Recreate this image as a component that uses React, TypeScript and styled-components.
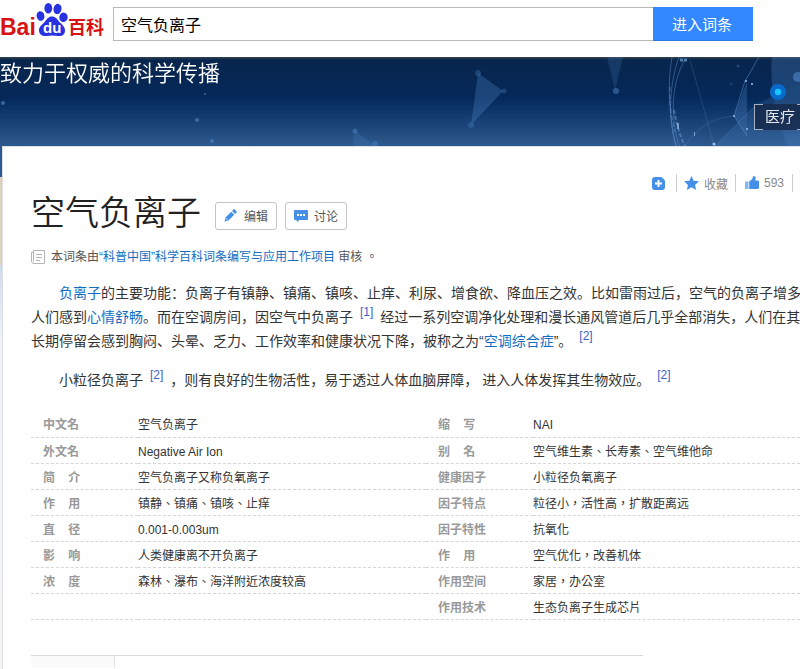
import React from "react";
import styled, { createGlobalStyle } from "styled-components";

const SC = `"Liberation Sans", "Noto Sans CJK SC", sans-serif`;
const TC = `"Liberation Sans", "Noto Sans CJK TC", sans-serif`;

const GlobalStyle = createGlobalStyle`
  *, *::before, *::after { box-sizing: border-box; }
  html, body { margin: 0; background: #fff; overflow-x: hidden; }
  body { font: 14px/24px ${SC}; color: #333; }
  h1, p { margin: 0; font-weight: 400; }
  a { color: #136ec2; text-decoration: none; }
  button, input { font-family: inherit; }
`;

const Page = styled.div`
  display: flex;
  flex-direction: column;
  min-height: 100vh;
`;

const Header = styled.header`
  display: flex;
  height: 57px;
  padding: 7px 47px 0 0;
`;

const LogoLink = styled.a`
  flex: none;
  width: 113px;
  margin-top: -7px;
  svg { display: block; }
`;

const SearchForm = styled.form`
  flex: 1;
  display: flex;
  height: 34px;
`;

const SearchInput = styled.input`
  flex: 1;
  min-width: 0;
  border: 1px solid #b8b8b8;
  border-right: 0;
  border-radius: 0;
  padding: 0 7px;
  font-size: 16px;
  color: #000;
  outline: none;
`;

const SearchButton = styled.button`
  width: 100px;
  border: 0;
  border-bottom: 1px solid #2f78de;
  padding: 0 2px 0 0;
  background: #3388ff;
  color: #fff;
  font-size: 15px;
`;

const Banner = styled.section`
  position: relative;
  height: 89px;
  overflow: hidden;
  background: linear-gradient(#33414f 0, #08264d 3px, #052859 40px, #0d3468 52px, #2d5a8e 100%);
`;

const BannerArt = styled.svg`
  position: absolute;
  top: 0;
  right: 0;
`;

const Slogan = styled.p`
  position: relative;
  font-size: 22px;
  line-height: 34px;
  color: #fff;
  font-weight: 350;
  white-space: nowrap;
`;

const TopicTag = styled.a`
  position: absolute;
  top: 47px;
  right: -6px;
  width: 52px;
  height: 26px;
  padding-left: 10px;
  line-height: 26px;
  font-size: 15px;
  color: #e4e8ee;
  background: rgba(22, 42, 74, 0.85);
  border: solid #a4b0c2;
  border-width: 0 1px;
  &::before, &::after {
    content: "";
    position: absolute;
    top: 0;
    bottom: 0;
    width: 8px;
    border: solid #a4b0c2;
    border-width: 1px 0;
  }
  &::before { left: 0; }
  &::after { right: 0; }
`;

const Body = styled.div`
  flex: 1;
  display: flex;
  background: linear-gradient(#2d5a8e 0 31px, #ddd0bd 31px 119px, #cbdcf0 119px, #f1f4f8 200px, #f5f5f5 100%);
`;

const Article = styled.main`
  flex: 1;
  min-width: 0;
  margin-left: 2px;
  padding: 26px 0 0 28px;
  border-left: 1px solid #dedfe4;
  border-top: 1px solid #d9e0ec;
  background: #fff;
  overflow: hidden;
`;

const Actions = styled.div`
  display: flex;
  justify-content: flex-end;
  align-items: center;
  height: 20px;
  padding-right: 7px;
`;

const Action = styled.button<{ $left?: number; $right?: number }>`
  display: flex;
  align-items: center;
  gap: 5px;
  height: 18px;
  padding: 0 ${(p) => p.$right ?? 7}px 0 ${(p) => p.$left ?? 7}px;
  border: 0;
  border-right: 1px solid #ccc;
  background: none;
  font-size: 12px;
  color: #888;
`;

const TitleRow = styled.div`
  display: flex;
  align-items: center;
  height: 44px;
  gap: 8px;
  margin-top: -2px;
`;

const Title = styled.h1`
  && { font-weight: 350; }
  font-size: 34px;
  line-height: 44px;
  color: #222;
  margin-right: 6px;
`;

const EditButton = styled.button`
  display: flex;
  align-items: center;
  justify-content: space-between;
  width: 62px;
  height: 28px;
  margin-top: 5px;
  padding: 0 8px;
  border: 1px solid #c4c4c4;
  border-radius: 3px;
  background: #fff;
  font-size: 12px;
  color: #555;
`;

const Note = styled.p`
  display: flex;
  align-items: center;
  gap: 6px;
  margin-top: 10px;
  font-family: ${TC};
  font-size: 12px;
  color: #555;
  white-space: nowrap;
`;

const Summary = styled.p`
  margin-bottom: 15px;
  text-indent: 28px;
  line-height: 24px;
  white-space: nowrap;
`;

const Summaries = styled.div`
  padding-top: 12px;
`;

const Ref = styled.a`
  display: inline-block;
  height: 24px;
  margin: 0 7px;
  font-size: 12px;
  line-height: 12px;
  vertical-align: top;
  text-indent: 0;
  padding-top: 1px;
  color: #3c62c6;
`;

const InfoTable = styled.table`
  width: 100%;
  margin-top: 19px;
  border-collapse: collapse;
  table-layout: fixed;
  font-family: ${TC};
  font-size: 12px;
  line-height: 22px;
  white-space: nowrap;
  tr { height: 26px; border-bottom: 1px dashed #d6d6d6; }
  th, td { padding: 3px 0 0; text-align: left; }
  th { padding-left: 12px; color: #999; }
`;

const Catalog = styled.div`
  width: 80%;
  max-width: 612px;
  margin-top: 35px;
  border-top: 1px solid #dadada;
`;

const CatalogTab = styled.div`
  width: 84px;
  height: 12px;
  background: #fbfbfb;
  border-right: 1px solid #e0e0e0;
`;

const Logo = () => (
  <svg width="106" height="44" viewBox="0 0 106 44" role="img" aria-label="Baidu 百科">
    <g fill="#2932e1">
      <ellipse cx="40.500" cy="16" rx="3.900" ry="4.900" transform="rotate(-12 40.500 16)" />
      <ellipse cx="48.300" cy="8.200" rx="3.900" ry="5.200" />
      <ellipse cx="57.500" cy="9" rx="4" ry="5.200" transform="rotate(12 57.500 9)" />
      <ellipse cx="63.500" cy="17.300" rx="4.200" ry="4.700" transform="rotate(8 63.500 17.300)" />
      <path d="M52 16.500c3.500 0 5 2.500 7 5 2 2.400 6.500 5 6 9.500-.4 4-3.500 5.500-6.500 5-4-.7-8-.7-12 0-3.500.6-7.300-1-7.500-5.500-.2-4.300 4-6 6-9 2-2.500 3.500-5 7-5z" />
    </g>
    <g fontFamily="Liberation Sans" fontWeight="700">
      <text x="0" y="35" fontSize="23" fill="#d81212">Bai</text>
      <text x="43" y="33" fontSize="15" fill="#fff">du</text>
    </g>
    <text x="68" y="34" fontSize="18" fontWeight="700" fontFamily="Noto Sans CJK SC" fill="#d81212">百科</text>
  </svg>
);

const Art = () => (
  <BannerArt width="800" height="89" viewBox="0 0 800 89" aria-hidden="true">
    <g fill="#5f9bdc" opacity=".3">
      <path d="M478 16l25 18-32 34z" opacity=".85" />
      <path d="M354 73l23 17h-24zM607 0h16l-8 33z" opacity=".55" />
      <path d="M747 24v55l-13-20zM772 0h28v89h-12c-10-24-19-54-16-89z" opacity=".8" />
      <path d="M715 89l42-42 43-21v63z" opacity=".5" />
    </g>
    <g fill="#4c86c6" opacity=".65">
      <circle cx="3" cy="46" r="2" /><circle cx="197" cy="63" r="2" /><circle cx="212" cy="84" r="2" />
      <circle cx="205" cy="37" r="1" /><circle cx="478" cy="16" r="3" opacity=".5" />
      <circle cx="504" cy="34" r="2.500" opacity=".5" /><circle cx="471" cy="68" r="3" opacity=".5" />
      <circle cx="616" cy="34" r="3" opacity=".8" /><circle cx="355" cy="74" r="2.500" opacity=".7" />
      <circle cx="375" cy="87" r="3" opacity=".7" />
      <circle cx="798" cy="20" r="5" /><circle cx="738" cy="9" r="1.500" opacity=".6" />
      <circle cx="731" cy="27" r="1.500" opacity=".4" />
    </g>
    <g fill="none" stroke="#6da0d8" strokeWidth="1">
      <path d="M672 0c-5 28-3 60 4 89M679 0c-9 26-12 58-3 89M685 2c-15 28-14 58-6 87" opacity=".4" />
      <path d="M670 30c-1 18 2 32 5 45" strokeDasharray="5 2" opacity=".5" />
      <path d="M674 53c2 12 6 26 11 36" strokeWidth="2" strokeDasharray="4 2" opacity=".5" />
      <path d="M680 3h8" strokeWidth="3" strokeDasharray="3 1" opacity=".7" />
      <path d="M690 3l24 85M685 89c12-18 25-27 48-30M715 89l42-42" opacity=".22" />
      <path d="M759 0l-14 24-11 35 13 20" opacity=".45" />
    </g>
    <g fill="#9cc1ec">
      <circle cx="746" cy="24" r="1" /><circle cx="752" cy="27" r="1" /><circle cx="734" cy="59" r="1" />
      <circle cx="747" cy="72" r="1" /><circle cx="714" cy="87" r="1.500" /><path d="M694 75h1v4h-1zM677 66h2v6h-2z" opacity=".7" />
    </g>
    <circle cx="778" cy="35" r="8" fill="#086bcb" />
    <circle cx="778" cy="35" r="3.200" fill="#16c5ff" />
  </BannerArt>
);

const PlusIcon = () => (
  <svg width="13" height="13" viewBox="0 0 13 13" aria-hidden="true">
    <path d="M3 0h6.500L13 3.500V10a3 3 0 0 1-3 3H3a3 3 0 0 1-3-3V3a3 3 0 0 1 3-3z" fill="#4590e6" />
    <path d="M6.500 3v7M3 6.500h7" stroke="#fff" strokeWidth="2" />
  </svg>
);

const StarIcon = () => (
  <svg width="15" height="14" viewBox="0 0 15 14" aria-hidden="true">
    <path d="M7.500 0l2.100 4.800 5.400.5-4 3.600 1.200 5.100-4.700-2.700L2.800 14 4 8.900 0 5.300l5.400-.5z" fill="#4590e6" />
  </svg>
);

const ThumbIcon = () => (
  <svg width="14" height="14" viewBox="0 0 14 14" aria-hidden="true">
    <path d="M0 5.500h3.500V13H0z" fill="#85b7f0" />
    <path d="M4.200 5.500L7.300 3 8 .3c2-.5 3 .6 2.600 2.300L10.200 4.500H13c1 0 1.200.8 1 1.600v5.700c-.2.8-.8 1.200-1.600 1.200H4.200z" fill="#4590e6" />
  </svg>
);

const PencilIcon = () => (
  <svg width="13" height="13" viewBox="0 0 13 13" aria-hidden="true">
    <path d="M.500 12.500l1-4L7.200 2.800l3 3-5.700 5.700zM8 2l1.500-1.500c.4-.4.900-.4 1.300 0l1.700 1.700c.4.400.4.900 0 1.300L11 5z" fill="#4590e6" />
    <path d="M1.800 9.300l1.900 1.900" stroke="#fff" strokeWidth=".8" />
  </svg>
);

const ChatIcon = () => (
  <svg width="14" height="13" viewBox="0 0 14 13" aria-hidden="true">
    <path d="M1 1h12a1 1 0 0 1 1 1v8a1 1 0 0 1-1 1H5.500L3 13 2.500 11H1a1 1 0 0 1-1-1V2a1 1 0 0 1 1-1z" fill="#4590e6" />
    <path d="M3 5h2v2H3zM6 5h2v2H6zM9 5h2v2H9z" fill="#fff" />
  </svg>
);

const DocIcon = () => (
  <svg width="14" height="14" viewBox="0 0 14 14" fill="none" stroke="#b5b5b5" aria-hidden="true">
    <path d="M2.500.5h11v13H3A2.500 2.500 0 0 1 .5 11V2.500h2M2.500.5v11M5 4.500h6M5 7.500h6M5 10.500h4" />
  </svg>
);

const spaced = (a: string, b: string) => `${a}\u00a0\u00a0\u00a0\u00a0${b}`;

const rows = [
  ["中文名", "空气负离子", spaced("缩", "写"), "NAI"],
  ["外文名", "Negative Air Ion", spaced("别", "名"), "空气维生素、长寿素、空气维他命"],
  [spaced("简", "介"), "空气负离子又称负氧离子", "健康因子", "小粒径负氧离子"],
  [spaced("作", "用"), "镇静、镇痛、镇咳、止痒", "因子特点", "粒径小，活性高，扩散距离远"],
  [spaced("直", "径"), "0.001-0.003um", "因子特性", "抗氧化"],
  [spaced("影", "响"), "人类健康离不开负离子", spaced("作", "用"), "空气优化，改善机体"],
  [spaced("浓", "度"), "森林、瀑布、海洋附近浓度较高", "作用空间", "家居，办公室"],
  ["", "", "作用技术", "生态负离子生成芯片"],
];

const InfoCol = styled.col<{ $w?: number }>`
  width: ${(p) => (p.$w ? `${p.$w}px` : "auto")};
`;

export default function App() {
  return (
    <Page lang="zh-CN">
      <GlobalStyle />
      <Header>
        <LogoLink href="#"><Logo /></LogoLink>
        <SearchForm onSubmit={(e) => e.preventDefault()}>
          <SearchInput aria-label="搜索词条" defaultValue="空气负离子" />
          <SearchButton type="submit">进入词条</SearchButton>
        </SearchForm>
      </Header>
      <Banner>
        <Art />
        <Slogan>致力于权威的科学传播</Slogan>
        <TopicTag href="#">医疗</TopicTag>
      </Banner>
      <Body>
        <Article>
          <Actions>
            <Action $right={11} type="button" aria-label="添加"><PlusIcon /></Action>
            <Action type="button"><StarIcon />收藏</Action>
            <Action $left={9} $right={8} type="button"><ThumbIcon />593</Action>
          </Actions>
          <TitleRow>
            <Title>空气负离子</Title>
            <EditButton type="button"><PencilIcon />编辑</EditButton>
            <EditButton type="button"><ChatIcon />讨论</EditButton>
          </TitleRow>
          <Note lang="zh-TW">
            <DocIcon />
            <span>本词条由<a href="#">“科普中国”科学百科词条编写与应用工作项目</a> 审核 。</span>
          </Note>
          <Summaries>
            <Summary>
              <a href="#">负离子</a>的主要功能：负离子有镇静、镇痛、镇咳、止痒、利尿、增食欲、降血压之效。比如雷雨过后，空气的负离子增多<br />
              人们感到<a href="#">心情舒畅</a>。而在空调房间，因空气中负离子<Ref href="#">[1]</Ref>经过一系列空调净化处理和漫长通风管道后几乎全部消失，人们在其<br />
              长期停留会感到胸闷、头晕、乏力、工作效率和健康状况下降，被称之为“<a href="#">空调综合症</a>”。<Ref href="#">[2]</Ref>
            </Summary>
            <Summary>
              小粒径负离子<Ref href="#">[2]</Ref>，则有良好的生物活性，易于透过人体血脑屏障， 进入人体发挥其生物效应。<Ref href="#">[2]</Ref>
            </Summary>
          </Summaries>
          <InfoTable lang="zh-TW">
            <colgroup>
              <InfoCol $w={107} /><InfoCol $w={288} /><InfoCol $w={107} /><InfoCol />
            </colgroup>
            <tbody>
              {rows.map(([a, b, c, d]) => (
                <tr key={c + d}>
                  <th scope="row">{a}</th><td>{b}</td>
                  <th scope="row">{c}</th><td>{d}</td>
                </tr>
              ))}
            </tbody>
          </InfoTable>
          <Catalog><CatalogTab /></Catalog>
        </Article>
      </Body>
    </Page>
  );
}
